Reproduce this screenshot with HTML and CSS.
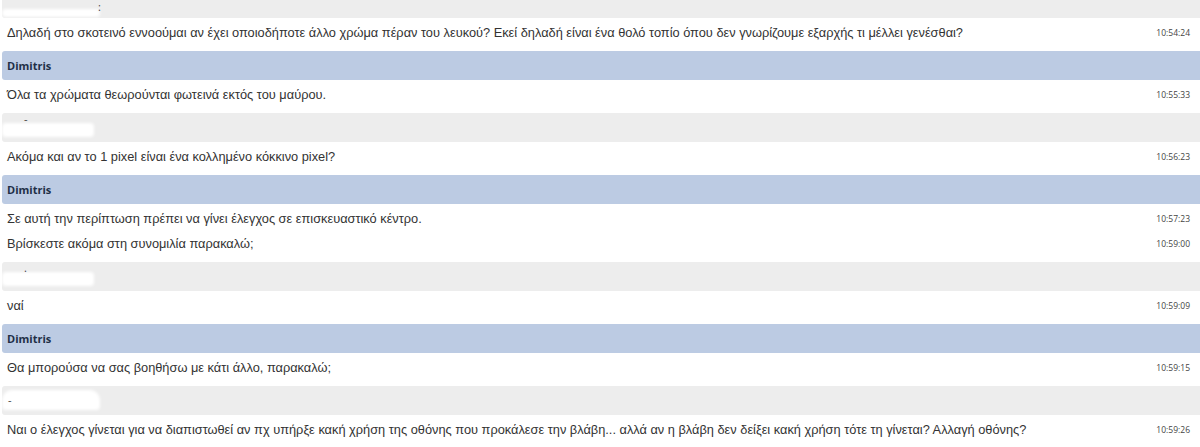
FILE: index.html
```html
<!DOCTYPE html>
<html>
  <head>
    <title>Chat transcript</title>
    <link rel="stylesheet" href="styles.css">
  </head>
  <body>
    <div class="transcript">
      <div class="head guest">
        <span class="smudge smudge-low"></span>
        <span class="mark mark-colon">:</span>
      </div>
      <div class="msgs">
        <div class="msg">
          <span class="text">Δηλαδή στο σκοτεινό εννοούμαι αν έχει οποιοδήποτε άλλο χρώμα πέραν του λευκού? Εκεί δηλαδή είναι ένα θολό τοπίο όπου δεν γνωρίζουμε εξαρχής τι μέλλει γενέσθαι?</span>
          <span class="time">10:54:24</span>
        </div>
      </div>

      <div class="head agent">Dimitris</div>
      <div class="msgs">
        <div class="msg">
          <span class="text">Όλα τα χρώματα θεωρούνται φωτεινά εκτός του μαύρου.</span>
          <span class="time">10:55:33</span>
        </div>
      </div>

      <div class="head guest">
        <span class="smudge smudge-mid"></span>
        <span class="mark mark-dot1">-</span>
      </div>
      <div class="msgs">
        <div class="msg">
          <span class="text">Ακόμα και αν το 1 pixel είναι ένα κολλημένο κόκκινο pixel?</span>
          <span class="time">10:56:23</span>
        </div>
      </div>

      <div class="head agent">Dimitris</div>
      <div class="msgs">
        <div class="msg">
          <span class="text">Σε αυτή την περίπτωση πρέπει να γίνει έλεγχος σε επισκευαστικό κέντρο.</span>
          <span class="time">10:57:23</span>
        </div>
        <div class="msg">
          <span class="text">Βρίσκεστε ακόμα στη συνομιλία παρακαλώ;</span>
          <span class="time">10:59:00</span>
        </div>
      </div>

      <div class="head guest">
        <span class="smudge smudge-mid"></span>
        <span class="mark mark-dot1">.</span>
      </div>
      <div class="msgs">
        <div class="msg">
          <span class="text">ναί</span>
          <span class="time">10:59:09</span>
        </div>
      </div>

      <div class="head agent">Dimitris</div>
      <div class="msgs">
        <div class="msg">
          <span class="text">Θα μπορούσα να σας βοηθήσω με κάτι άλλο, παρακαλώ;</span>
          <span class="time">10:59:15</span>
        </div>
      </div>

      <div class="head guest">
        <span class="smudge smudge-big"></span>
        <span class="mark mark-dash">-</span>
      </div>
      <div class="msgs">
        <div class="msg">
          <span class="text">Ναι ο έλεγχος γίνεται για να διαπιστωθεί αν πχ υπήρξε κακή χρήση της οθόνης που προκάλεσε την βλάβη... αλλά αν η βλάβη δεν δείξει κακή χρήση τότε τη γίνεται? Αλλαγή οθόνης?</span>
          <span class="time">10:59:26</span>
        </div>
      </div>
    </div>
  </body>
</html>
```

FILE: styles.css
```css
body {
  margin: 0;
  padding: 0;
  background-color: #fff;
  font-family: "Liberation Sans", Arial, sans-serif;
  overflow: hidden;
}
.transcript {
  margin-top: -11px; /* list is scrolled, first header is cut */
}
.head {
  height: 29px;
  margin-left: 2px;
  padding-left: 5px;
  border-radius: 3px 0 0 3px;
  display: flex;
  align-items: center;
  position: relative;
  font-family: "Open Sans", sans-serif;
  font-size: 11px;
  font-weight: bold;
  color: #1f2f47;
}
.guest {
  background-color: #ededed;
}
.agent {
  background-color: #bccbe3;
}
.msgs {
  padding: 2px 0 6px;
}
.msg {
  height: 25px;
  display: flex;
  align-items: center;
  justify-content: space-between;
  padding: 0 10px 0 7px;
  font-size: 12.8px;
  color: #333;
}
.time {
  font-family: "Open Sans", sans-serif;
  font-size: 8.5px;
  color: #444;
}
/* redacted names */
.smudge {
  position: absolute;
  left: 0;
  background-color: #fff;
  filter: blur(1.5px);
  border-radius: 4px;
}
.smudge-low {
  top: 20px;
  width: 98px;
  height: 8px;
}
.smudge-mid {
  top: 10px;
  width: 92px;
  height: 14px;
}
.smudge-big {
  top: 4px;
  width: 98px;
  height: 20px;
  border-radius: 10px 10px 4px 4px;
}
.mark {
  position: absolute;
  font-weight: normal;
  line-height: 12px;
  color: #444;
}
.mark-colon {
  left: 96px;
  top: 12px;
}
.mark-dot1 {
  left: 22px;
  top: 0;
}
.mark-dash {
  left: 6px;
  top: 8px;
}
```
